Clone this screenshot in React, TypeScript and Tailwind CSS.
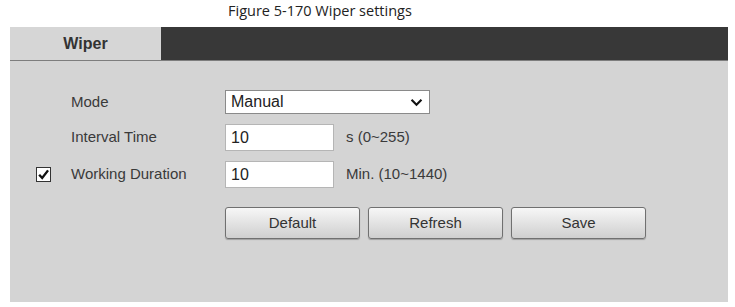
import { FC, ReactNode } from "react";

const labelFont = { fontFamily: '"Liberation Sans", Arial, sans-serif' };

const Row: FC<{ check?: boolean; label: string; children: ReactNode; h: string }> = ({ check, label, children, h }) => (
  <div className={`flex items-center ${h}`}>
    <div className="w-[35px] pl-[26px] flex items-center">
      {check ? (
        <span className="flex h-[15px] w-[15px] items-center justify-center border border-[#333] bg-white">
          <svg viewBox="0 0 12 12" className="h-[13px] w-[13px]">
            <path d="M2 6.2 L4.8 9.2 L10.2 2.2" fill="none" stroke="#111" strokeWidth="2.2" />
          </svg>
        </span>
      ) : null}
    </div>
    <div className="w-[180px] pl-[26px] text-[15px] text-[#3a3a3a]">{label}</div>
    {children}
  </div>
);

const Btn: FC<{ children: ReactNode }> = ({ children }) => (
  <button className="h-[32px] w-[135px] rounded-[3px] border border-[#707070] bg-gradient-to-b from-[#f7f7f7] to-[#cfcfcf] text-[15px] text-[#333] shadow-[0_1px_1px_rgba(0,0,0,0.25)]">
    {children}
  </button>
);

export default function App() {
  return (
    <div className="w-[735px] h-[307px] bg-white" style={labelFont}>
      {/* caption */}
      <div
        className="h-[27px] pl-[228px] pt-[1px] text-[14.5px] leading-[20px] text-[#222]"
        style={{ fontFamily: '"Open Sans", "Noto Sans", sans-serif' }}
      >
        Figure 5-170 Wiper settings
      </div>

      {/* panel */}
      <div className="ml-[10px] flex h-[275px] w-[718px] flex-col bg-[#d4d4d4]">
        <div className="flex h-[34px] border-b border-[#7d7d7d]">
          <div className="flex w-[151px] items-center justify-center bg-[#d6d6d6] text-[16px] font-bold text-[#333]">
            Wiper
          </div>
          <div className="flex-1 bg-[#383838]" />
        </div>

        <div className="flex flex-col pt-[29px]">
          <Row label="Mode" h="h-[24px]">
            <div className="flex h-[24px] w-[205px] items-center justify-between border border-[#8a8a8a] bg-white pl-[5px] pr-[6px] text-[16px] text-[#222]">
              <span>Manual</span>
              <svg viewBox="0 0 14 10" className="h-[9px] w-[13px]">
                <path d="M1.5 2 L7 7.5 L12.5 2" fill="none" stroke="#111" strokeWidth="2.4" />
              </svg>
            </div>
          </Row>

          <div className="h-[10px]" />
          <Row label="Interval Time" h="h-[27px]">
            <div className="flex h-[27px] w-[109px] items-center border border-[#b5b5b5] bg-white pl-[5px] text-[16px] text-[#222]">
              10
            </div>
            <span className="ml-[12px] text-[15px] text-[#3a3a3a]">s (0~255)</span>
          </Row>

          <div className="h-[10px]" />
          <Row check label="Working Duration" h="h-[27px]">
            <div className="flex h-[27px] w-[109px] items-center border border-[#b5b5b5] bg-white pl-[5px] text-[16px] text-[#222]">
              10
            </div>
            <span className="ml-[12px] text-[15px] text-[#3a3a3a]">Min. (10~1440)</span>
          </Row>

          <div className="mt-[19px] flex gap-[8px] pl-[215px]">
            <Btn>Default</Btn>
            <Btn>Refresh</Btn>
            <Btn>Save</Btn>
          </div>
        </div>
      </div>
    </div>
  );
}
